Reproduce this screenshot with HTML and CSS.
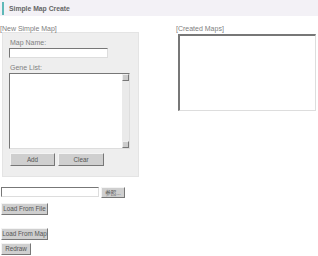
FILE: index.html
```html
<!DOCTYPE html>
<html lang="en">
<head>
  <meta charset="UTF-8">
  <title>Simple Map Create</title>
  <link rel="stylesheet" href="styles.css">
</head>
<body>

<div class="header">
  <span class="title">Simple Map Create</span>
</div>

<div class="main">
  <div class="left">
    <div class="caption">[New Simple Map]</div>
    <div class="panel">
      <label class="field-label">Map Name:</label>
      <input type="text" class="name-input">
      <label class="field-label gene-label">Gene List:</label>
      <div class="gene-box">
        <textarea class="gene-list"></textarea>
        <div class="scrollbar">
          <div class="arrow up"></div>
          <div class="track"></div>
          <div class="arrow down"></div>
        </div>
      </div>
      <div class="panel-buttons">
        <button class="btn add-btn">Add</button>
        <button class="btn clear-btn">Clear</button>
      </div>
    </div>
  </div>

  <div class="right">
    <div class="caption">[Created Maps]</div>
    <div class="maps"></div>
  </div>
</div>

<div class="loaders">
  <div class="file-row">
    <input type="text" class="file-input">
    <button class="btn browse-btn">参照...</button>
  </div>
  <button class="btn load-file">Load From File</button>
  <button class="btn load-map">Load From Map</button>
  <button class="btn redraw">Redraw</button>
</div>

</body>
</html>
```

FILE: styles.css
```css
body {
  margin: 0;
  font-family: "Liberation Sans", Arial, sans-serif;
  font-size: 7px;
  color: #808080;
  background-color: white;
}

.header {
  height: 16px;
  background-color: #f3f1f6;
  display: flex;
  align-items: center;
}

.title {
  margin-left: 2px;
  padding-left: 5px;
  border-left: 2px solid #5fb8b8;
  font-weight: bold;
  font-size: 6.8px;
  color: #666;
  line-height: 13px;
}

.main {
  display: flex;
  margin-top: 10px;
}

.left {
  width: 176px;
}

.caption {
  height: 6px;
  line-height: 6px;
  color: #808080;
}

.panel {
  margin-left: 2px;
  width: 137px;
  height: 145px;
  box-sizing: border-box;
  background-color: #eeeeee;
  border: 1px solid #e4e4e4;
  padding: 6px 0 0 6px;
  display: flex;
  flex-direction: column;
  align-items: flex-start;
}

.field-label {
  line-height: 8px;
  margin-left: 1px;
  color: #808080;
}

.name-input {
  width: 99px;
  height: 10px;
  box-sizing: border-box;
  margin: 1px 0 0 0;
  padding: 0;
  background: white;
  border-style: solid;
  border-width: 1px;
  border-color: #777 #ddd #ddd #777;
}

.gene-label {
  margin-top: 6px;
}

.gene-box {
  margin-top: 1px;
  width: 121px;
  height: 76px;
  box-sizing: border-box;
  display: flex;
  background: white;
  border-style: solid;
  border-width: 1px;
  border-color: #777 #ddd #ddd #777;
}

.gene-list {
  flex: 1;
  border: none;
  padding: 0;
  margin: 0;
  resize: none;
  background: white;
}

.scrollbar {
  width: 7px;
  display: flex;
  flex-direction: column;
  background-color: #eaeaea;
}

.arrow {
  height: 7px;
  box-sizing: border-box;
  background-color: #ccc;
  border-style: solid;
  border-width: 1px;
  border-color: #eee #777 #777 #eee;
}

.track {
  flex: 1;
}

.panel-buttons {
  display: flex;
  gap: 3px;
  margin-top: 4px;
  margin-left: 1px;
}

.btn {
  font-family: "Liberation Sans", Arial, sans-serif;
  font-size: 6.3px;
  color: #555;
  background-color: #cfcfcf;
  border-style: solid;
  border-width: 1px;
  border-color: #f4f4f4 #777 #777 #f4f4f4;
  padding: 0;
  margin: 0;
  height: 13px;
  line-height: 10px;
  white-space: nowrap;
  cursor: pointer;
}

.add-btn {
  width: 45px;
}

.clear-btn {
  width: 46px;
}

.right {
  display: flex;
  flex-direction: column;
}

.maps {
  margin-left: 2px;
  margin-top: 2px;
  width: 138px;
  height: 77px;
  box-sizing: border-box;
  background: white;
  border-style: solid;
  border-width: 2px 1px 1px 2px;
  border-color: #777 #ddd #ddd #777;
}

.loaders {
  margin-top: 10px;
  padding-left: 1px;
  display: flex;
  flex-direction: column;
  align-items: flex-start;
}

.file-row {
  display: flex;
  gap: 2px;
  align-items: flex-start;
}

.file-input {
  width: 98px;
  height: 10px;
  box-sizing: border-box;
  margin: 0;
  padding: 0;
  border-style: solid;
  border-width: 1px;
  border-color: #777 #ddd #ddd #777;
}

.browse-btn {
  width: 24px;
  height: 11px;
  font-family: "Liberation Sans", "Noto Sans CJK JP", sans-serif;
  font-size: 5.5px;
}

.load-file {
  margin-top: 5px;
  width: 47px;
  height: 12px;
}

.load-map {
  margin-top: 13px;
  width: 47px;
  height: 12px;
}

.redraw {
  margin-top: 3px;
  width: 30px;
  height: 12px;
}
```
